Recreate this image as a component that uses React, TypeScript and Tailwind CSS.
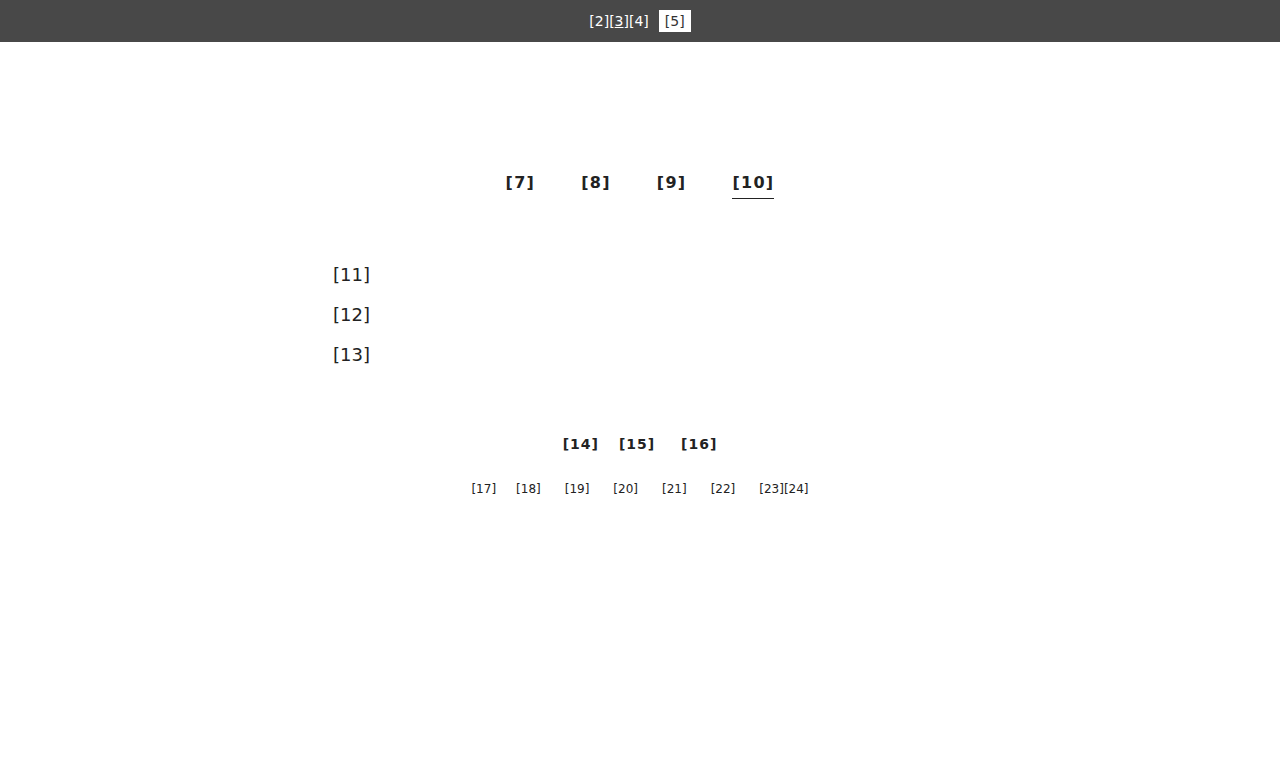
const font = { fontFamily: '"DejaVu Sans", sans-serif' };

export default function App() {
  return (
    <div className="min-h-[762px] bg-white text-[#222]" style={font}>
      <div className="flex h-[42px] items-center justify-center bg-[#484848] text-[14px] leading-[20px] text-white">
        <span className="mt-[-1px]">
          [2][<span className="underline">3</span>][4]
        </span>
        <span className="ml-[10px] flex h-[22px] items-center bg-white px-[6px] text-[#333]">[5]</span>
      </div>

      <nav className="mt-[129px] flex justify-center gap-[46px] text-[16px] font-bold tracking-[0.08em]">
        <a className="pb-[3px]">[7]</a>
        <a className="pb-[3px]">[8]</a>
        <a className="pb-[3px]">[9]</a>
        <a className="border-b border-[#222] pb-[3px]">[10]</a>
      </nav>

      <ul className="mx-auto mt-[56px] w-[614px] text-[18px] leading-[40px]">
        <li>[11]</li>
        <li>[12]</li>
        <li>[13]</li>
      </ul>

      <div className="mt-[59px] flex justify-center text-[14px] font-bold tracking-[0.07em] leading-[20px]">
        <span>[14]</span>
        <span className="ml-[20px]">[15]</span>
        <span className="ml-[26px]">[16]</span>
      </div>

      <div className="mt-[27px] flex justify-center gap-[24px] text-[12px] leading-[16px]">
        <span className="mr-[-4px]">[17]</span>
        <span>[18]</span>
        <span>[19]</span>
        <span>[20]</span>
        <span>[21]</span>
        <span>[22]</span>
        <span>[23][24]</span>
      </div>
    </div>
  );
}
